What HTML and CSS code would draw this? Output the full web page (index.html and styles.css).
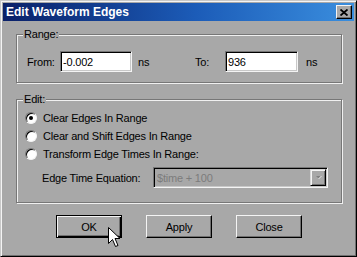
FILE: index.html
```html
<!DOCTYPE html>
<html lang="en">
<head>
    <meta charset="UTF-8">
    <title>Edit Waveform Edges</title>
    <link rel="stylesheet" href="styles.css">
</head>
<body>

    <div class="window">
        <!-- Title bar -->
        <div class="titlebar">
            <span class="title">Edit Waveform Edges</span>
            <span class="close-btn">
                <svg width="8" height="7" viewBox="0 0 8 7">
                    <path d="M0.5 0.5 L7.5 6.5 M7.5 0.5 L0.5 6.5" stroke="#000" stroke-width="1.8" fill="none"/>
                </svg>
            </span>
        </div>

        <div class="content">
            <!-- Range group -->
            <fieldset class="group">
                <legend>Range:</legend>
                <div class="range-row">
                    <label class="lbl-from" for="from">From:</label>
                    <input class="textbox w-from" id="from" type="text" value="-0.002">
                    <span class="unit unit-from">ns</span>
                    <label class="lbl-to" for="to">To:</label>
                    <input class="textbox w-to" id="to" type="text" value="936">
                    <span class="unit unit-to">ns</span>
                </div>
            </fieldset>

            <!-- Edit group -->
            <fieldset class="group group-edit">
                <legend>Edit:</legend>
                <div class="radio-list">
                    <div class="radio-row"><span class="radio checked"></span>Clear Edges In Range</div>
                    <div class="radio-row"><span class="radio"></span>Clear and Shift Edges In Range</div>
                    <div class="radio-row"><span class="radio"></span>Transform Edge Times In Range:</div>
                </div>
                <div class="equation-row">
                    <span class="lbl-eq">Edge Time Equation:</span>
                    <div class="combo">
                        <span class="combo-text">$time + 100</span>
                        <span class="combo-btn">
                            <svg width="7" height="5" viewBox="0 0 7 5">
                                <path d="M1 1 L6 1 L3.5 3.5 Z" fill="#808080"/>
                                <path d="M3.5 4 L6.5 1" stroke="#e8e8e8" stroke-width="1" fill="none"/>
                            </svg>
                        </span>
                    </div>
                </div>
            </fieldset>

            <!-- Buttons -->
            <div class="buttons">
                <button class="btn btn-default">OK</button>
                <button class="btn">Apply</button>
                <button class="btn">Close</button>
            </div>
        </div>

        <!-- Mouse pointer over the OK button -->
        <svg class="cursor" width="13" height="21" viewBox="0 0 13 21">
            <path d="M0.5 0.5 L0.5 16.5 L4.5 12.5 L7.5 19.5 L10 18.5 L7 11.5 L12 11.5 Z" fill="#fff" stroke="#000" stroke-width="1"/>
        </svg>
    </div>

</body>
</html>
```

FILE: styles.css
```css
/* General Style */
body {
    margin: 0;
    padding: 0;
    background-color: #000;
    font-family: "Liberation Sans", Arial, sans-serif;
    font-size: 11px;
    letter-spacing: -0.2px;
    color: #000;
}

/* Window frame */
.window {
    position: relative;
    box-sizing: border-box;
    width: 357px;
    height: 257px;
    padding: 2px;
    background-color: #a8a8a8;
    border: 1px solid;
    border-color: #c8c8c8 #000 #000 #c8c8c8;
    box-shadow: inset 1px 1px #f4f4f4, inset -1px -1px #707070;
}

/* Title bar */
.titlebar {
    display: flex;
    align-items: center;
    justify-content: space-between;
    height: 18px;
    padding: 0 2px 0 3px;
    background: linear-gradient(to right, #0a2068, #1c5cb8 55%, #3a8ede);
}
.title {
    color: #fff;
    font-weight: bold;
    font-size: 12px;
    letter-spacing: 0;
}
.close-btn {
    display: flex;
    align-items: center;
    justify-content: center;
    box-sizing: border-box;
    width: 16px;
    height: 14px;
    background-color: #a8a8a8;
    border: 1px solid;
    border-color: #f4f4f4 #000 #000 #f4f4f4;
    box-shadow: inset -1px -1px #707070;
}

/* Content */
.content {
    padding: 0 12px 0 13px;
}

/* Group boxes */
.group {
    margin: 7px 0 0 0;
    padding: 0;
    min-width: 0;
    border: 1px solid #777;
    box-shadow: inset 1px 1px #f0f0f0, 1px 1px #f0f0f0;
}
.group legend {
    margin-left: 6px;
    padding: 0 1px;
    line-height: 13px;
    background-color: #a8a8a8;
}
.group-edit {
    margin-top: 10px;
}

/* Range row */
.range-row {
    display: flex;
    align-items: center;
    padding: 10px 0 10px 10px;
}
.lbl-from {
    width: 33px;
}
.lbl-to {
    width: 30px;
}
.textbox {
    box-sizing: border-box;
    height: 21px;
    margin: 0;
    padding: 0 2px;
    font-family: inherit;
    font-size: 11px;
    letter-spacing: -0.2px;
    color: #000;
    background-color: #fff;
    border: 1px solid;
    border-color: #777 #f4f4f4 #f4f4f4 #777;
    box-shadow: inset 1px 1px #000, inset -1px -1px #c8c8c8;
    outline: none;
}
.w-from {
    width: 72px;
}
.w-to {
    width: 73px;
}
.unit-from {
    width: 57px;
    padding-left: 6px;
}
.unit-to {
    padding-left: 8px;
}

/* Radio buttons */
.radio-list {
    padding: 3px 0 0 8px;
}
.radio-row {
    display: flex;
    align-items: center;
    height: 18px;
}
.radio {
    position: relative;
    box-sizing: border-box;
    width: 12px;
    height: 12px;
    margin-right: 6px;
    border-radius: 50%;
    background-color: #fff;
    border: 1px solid;
    border-color: #777 #f4f4f4 #f4f4f4 #777;
    box-shadow: inset 1px 1px #000;
}
.radio.checked::after {
    content: "";
    position: absolute;
    left: 3px;
    top: 3px;
    width: 4px;
    height: 4px;
    border-radius: 50%;
    background-color: #000;
}

/* Equation combo */
.equation-row {
    display: flex;
    align-items: center;
    margin-top: 4px;
    padding: 0 0 14px 25px;
}
.lbl-eq {
    width: 111px;
}
.combo {
    display: flex;
    align-items: center;
    justify-content: space-between;
    box-sizing: border-box;
    width: 175px;
    height: 21px;
    padding: 0 1px 0 3px;
    background-color: #a8a8a8;
    border: 1px solid;
    border-color: #777 #f4f4f4 #f4f4f4 #777;
    box-shadow: inset 1px 1px #000, inset -1px -1px #c8c8c8;
}
.combo-text {
    color: #7c7c7c;
}
.combo-btn {
    display: flex;
    align-items: center;
    justify-content: center;
    box-sizing: border-box;
    width: 16px;
    height: 17px;
    border: 1px solid;
    border-color: #d8d8d8 #000 #000 #d8d8d8;
    box-shadow: inset 1px 1px #f4f4f4, inset -1px -1px #707070;
}

/* Dialog buttons */
.buttons {
    display: flex;
    justify-content: center;
    gap: 24px;
    margin-top: 12px;
}
.btn {
    box-sizing: border-box;
    width: 66px;
    height: 23px;
    padding: 0;
    font-family: inherit;
    font-size: 11px;
    letter-spacing: -0.2px;
    color: #000;
    background-color: #a8a8a8;
    border: 1px solid;
    border-color: #f4f4f4 #000 #000 #f4f4f4;
    box-shadow: inset -1px -1px #707070;
}
.btn-default {
    border-color: #000;
    box-shadow: inset 1px 1px #f4f4f4, inset -1px -1px #000, inset -2px -2px #707070;
}

/* Pointer */
.cursor {
    position: absolute;
    left: 107px;
    top: 226px;
}
```
